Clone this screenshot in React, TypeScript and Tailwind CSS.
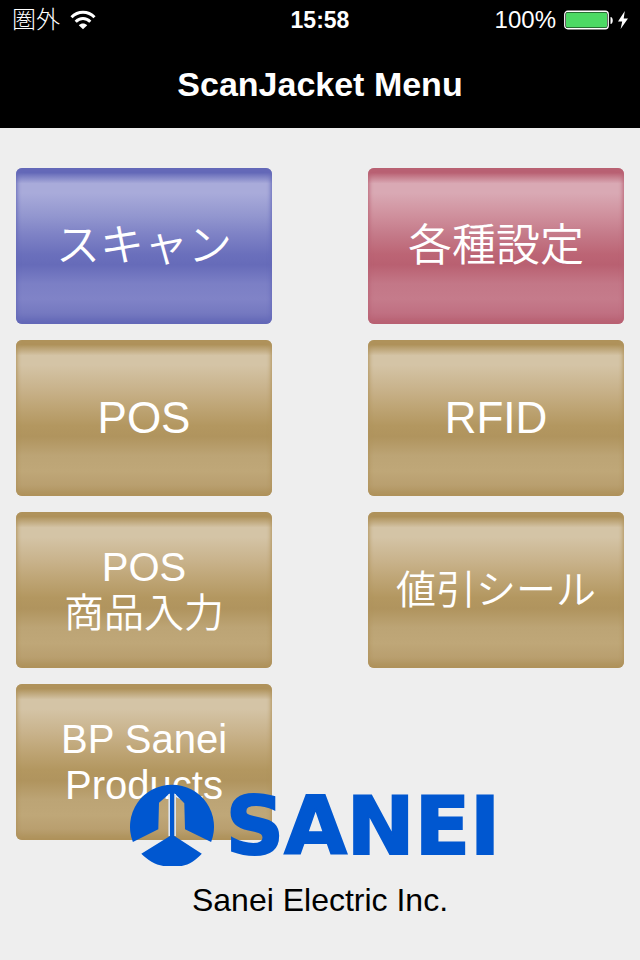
import clsx from "clsx";

type Tone = "blue" | "rose" | "gold";

interface MenuItem {
  lines: string[];
  tone: Tone;
  size: "large" | "medium";
}

const MENU_ITEMS: MenuItem[] = [
  { lines: ["スキャン"], tone: "blue", size: "large" },
  { lines: ["各種設定"], tone: "rose", size: "large" },
  { lines: ["POS"], tone: "gold", size: "large" },
  { lines: ["RFID"], tone: "gold", size: "large" },
  { lines: ["POS", "商品入力"], tone: "gold", size: "medium" },
  { lines: ["値引シール"], tone: "gold", size: "medium" },
  { lines: ["BP Sanei", "Products"], tone: "gold", size: "medium" },
];

const TONES: Record<Tone, string> = {
  blue: "bg-[linear-gradient(#6469b8_0,#6469b8_3%,#a9abda_10%,#a9abda_16%,#9296cf_31%,#7f83c6_42%,#6b70bc_55%,#666bb9_62%,#7b7fc5_74%,#8083c7_84%,#7579c0_93%,#6166b6_100%)] shadow-[inset_0_0_4px_1px_#6469b8]",
  rose: "bg-[linear-gradient(#b96173_0,#b96173_3%,#d9a9b4_10%,#d9a9b4_16%,#cf8f9c_31%,#c57b8a_42%,#bc6575_55%,#b96071_62%,#c37787_74%,#c57b8b_84%,#c07082_93%,#b75f70_100%)] shadow-[inset_0_0_4px_1px_#b96173]",
  gold: "bg-[linear-gradient(#af925b_0,#af925b_3%,#d4c4a6_10%,#d4c4a6_16%,#c9b38c_31%,#bfa677_42%,#b39760_55%,#b0945e_62%,#bca475_74%,#bfa778_84%,#b99f6f_93%,#ae915a_100%)] shadow-[inset_0_0_4px_1px_#af925b]",
};

function StatusBar() {
  return (
    <div className="grid h-10 grid-cols-3 items-center px-3">
      <div className="flex items-center gap-2.5">
        <span className="text-[24px] font-light leading-8">圏外</span>
        <svg className="h-5 w-[26px]" viewBox="0 0 26 20" fill="none" aria-label="Wi-Fi">
          <path d="M1.5 7.2C8 .6 18 .6 24.5 7.2" stroke="white" strokeWidth="3" />
          <path d="M5.7 11.7c4.2-4.2 10.4-4.2 14.6 0" stroke="white" strokeWidth="3" />
          <path d="M8.8 15.2c2.4-2.3 6-2.3 8.4 0L13 19.2z" fill="white" />
        </svg>
      </div>
      <span className="text-center text-[23px] font-bold leading-8">15:58</span>
      <div className="flex items-center justify-end gap-2">
        <span className="text-[24px] leading-8">100%</span>
        <svg className="h-5 w-[64px]" viewBox="0 0 64 20" aria-label="Battery charging">
          <rect x=".75" y="1.25" width="43.5" height="17.5" rx="3" fill="none" stroke="white" strokeWidth="1.3" />
          <rect x="2" y="2.5" width="41" height="15" rx="1.5" fill="#4cd964" />
          <path d="M46.5 7c3 0 3 7 0 7z" fill="white" />
          <path d="M60.8 1 54 11.4h4.2L56.6 19 64 8.6h-4.3z" fill="white" />
        </svg>
      </div>
    </div>
  );
}

function MenuButton({ item }: { item: MenuItem }) {
  return (
    <button
      type="button"
      className={clsx(
        "flex h-[156px] flex-col items-center justify-center rounded-md font-[350] text-white",
        item.size === "large" ? "text-[44px] leading-[52px]" : "text-[40px] leading-[46px]",
        TONES[item.tone],
      )}
    >
      {item.lines.map((line) => (
        <span key={line} className="whitespace-nowrap">
          {line}
        </span>
      ))}
    </button>
  );
}

function SaneiLogo() {
  return (
    <div className="flex h-[84px] items-center gap-3 pr-2.5 text-[#0057d0]">
      <svg className="h-[84px] w-[84px] shrink-0" viewBox="0 0 84 84" fill="currentColor" aria-hidden="true">
        <path d="M2.9 58A42 42 0 1 1 81.1 58L55 45.3 54.3 19.3 44.4 9.3V52L71.8 69.7C66 76 59.5 80.5 51.7 82H33.3C25 80.5 17.5 76 11.3 69.7L40 52V9.3L29 18.7 28.3 45.3z" />
        <path d="M39.2 10v42M45.2 10v42" stroke="#dbe5f3" strokeWidth="1.6" />
      </svg>
      <span className="font-['DejaVu_Sans'] text-[81px] font-bold leading-[84px] [-webkit-text-stroke:2px_#0057d0]">
        SANEI
      </span>
    </div>
  );
}

export default function App() {
  return (
    <div className="flex min-h-screen flex-col bg-[#eeeeee] font-['Liberation_Sans','Noto_Sans_CJK_JP',sans-serif]">
      <header className="bg-black text-white">
        <StatusBar />
        <h1 className="py-5 text-center text-[34px] font-bold leading-[48px]">ScanJacket Menu</h1>
      </header>

      <main className="grid grid-cols-2 gap-x-24 gap-y-4 px-4 pt-10">
        {MENU_ITEMS.map((item) => (
          <MenuButton key={item.lines.join(" ")} item={item} />
        ))}
      </main>

      {/* the logo overlaps the bottom edge of the last row */}
      <footer className="relative -mt-14 flex flex-col items-center gap-3 pb-8">
        <SaneiLogo />
        <p className="text-[32px] leading-10 text-black">Sanei Electric Inc.</p>
      </footer>
    </div>
  );
}
